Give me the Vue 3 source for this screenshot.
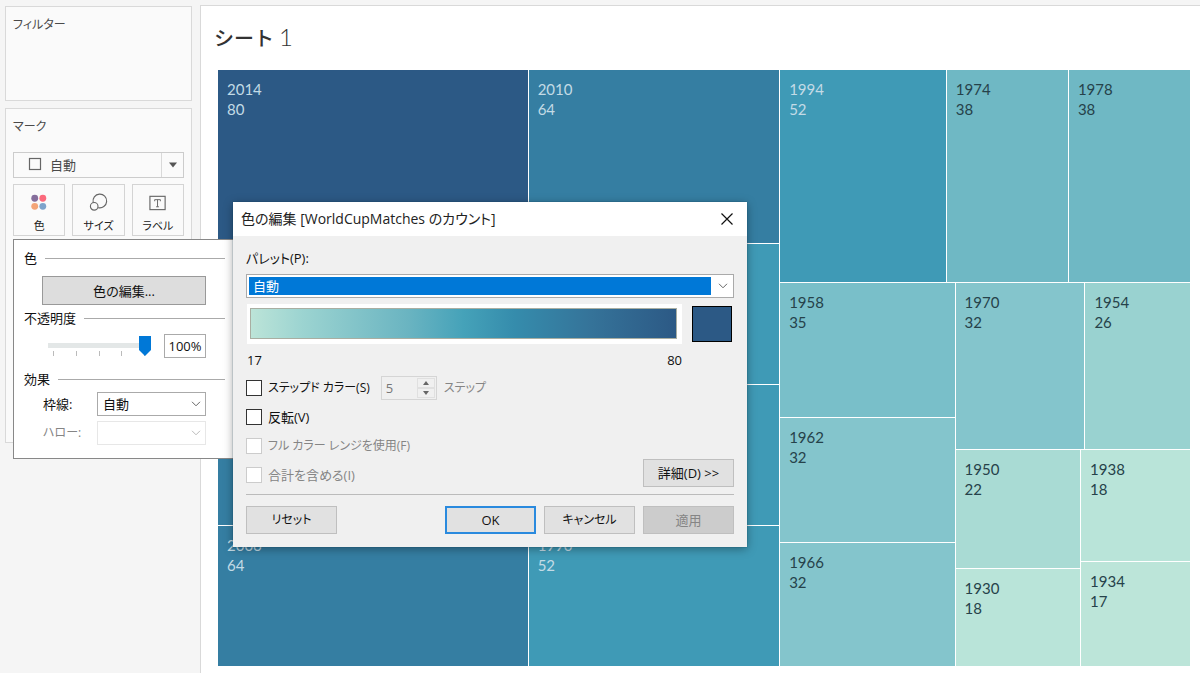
<script setup>
import { ref } from 'vue'

const opacity = ref(100)
const dark = (year, count, color) => ({ year, count, color, light: true, labelled: true })
const pale = (year, count, color) => ({ year, count, color, light: false, labelled: true })
const plain = (year, count, color) => ({ year, count, color, light: true, labelled: false })

const sum = (tiles) => tiles.reduce((total, tile) => total + tile.count, 0)
const grow = (count) => ({ flexGrow: count })
const paint = (tile) => ({ flexGrow: tile.count, backgroundColor: tile.color })

const first = [
  dark(2014, 80, '#2c5985'),
  plain(1998, 64, '#357ea2'),
  plain(2002, 64, '#357ea2'),
  dark(2006, 64, '#357ea2'),
]
const second = [
  dark(2010, 64, '#357ea2'),
  plain(1982, 52, '#3f9ab6'),
  plain(1986, 52, '#3f9ab6'),
  dark(1990, 52, '#3f9ab6'),
]
const upper = [
  dark(1994, 52, '#3f9ab6'),
  pale(1974, 38, '#6fb8c4'),
  pale(1978, 38, '#6fb8c4'),
]
const middle = [
  pale(1958, 35, '#79bfc9'),
  pale(1962, 32, '#84c5cc'),
  pale(1966, 32, '#84c5cc'),
]
const cornerTop = [pale(1970, 32, '#84c5cc'), pale(1954, 26, '#99d2d0')]
const cornerLeft = [pale(1950, 22, '#a9dbd4'), pale(1930, 18, '#b9e4d9')]
const cornerRight = [pale(1938, 18, '#b9e4d9'), pale(1934, 17, '#bce5d9')]

const cornerBottomSum = sum(cornerLeft) + sum(cornerRight)
const cornerSum = sum(cornerTop) + cornerBottomSum
const lowerSum = sum(middle) + cornerSum
const thirdSum = sum(upper) + lowerSum
</script>

<template>
  <div class="workspace">
    <aside class="side">
      <section class="card filters">
        <h2>フィルター</h2>
      </section>
      <section class="card marks">
        <h2>マーク</h2>
        <div class="mark-type">
          <select aria-label="マーク タイプ">
            <option>自動</option>
          </select>
          <svg class="square" width="14" height="14" viewBox="0 0 14 14"><rect x="1.5" y="1.5" width="11" height="11" fill="none" stroke="#666" stroke-width="1.2" /></svg>
          <span class="arrow"><svg width="10" height="6" viewBox="0 0 10 6"><path d="M1 0.5h8L5 5.5z" fill="#555" /></svg></span>
        </div>
        <div class="mark-buttons">
          <button type="button">
            <svg width="20" height="20" viewBox="0 0 20 20">
              <circle cx="5.5" cy="5.5" r="3.6" fill="#856e9c" /><circle cx="14" cy="5.5" r="3.6" fill="#fb6a7c" />
              <circle cx="5.5" cy="14" r="3.6" fill="#f4a578" /><circle cx="14" cy="14" r="3.6" fill="#7ea3cb" />
            </svg>
            <span>色</span>
          </button>
          <button type="button">
            <svg width="20" height="20" viewBox="0 0 20 20" fill="none" stroke="#666" stroke-width="1.2">
              <path d="M4.9 10A7.2 7.2 0 1 1 10.2 15.4" /><circle cx="6" cy="14" r="4" />
            </svg>
            <span>サイズ</span>
          </button>
          <button type="button">
            <svg width="20" height="20" viewBox="0 0 20 20" fill="none" stroke="#666">
              <rect x="1.5" y="3.5" width="16" height="14" stroke-width="1.2" />
              <path d="M6.5 8.7V7h6v1.7M9.5 7v7.5M8 14.5h3" />
            </svg>
            <span>ラベル</span>
          </button>
        </div>
      </section>
    </aside>

    <main class="sheet">
      <h1>シート <span>1</span></h1>
      <div class="treemap">
        <div class="column" :style="grow(sum(first))">
          <div v-for="t in first" :key="t.year" class="tile" :class="{ light: t.light }" :style="paint(t)"><p v-if="t.labelled">{{ t.year }}<br />{{ t.count }}</p></div>
        </div>
        <div class="column" :style="grow(sum(second))">
          <div v-for="t in second" :key="t.year" class="tile" :class="{ light: t.light }" :style="paint(t)"><p v-if="t.labelled">{{ t.year }}<br />{{ t.count }}</p></div>
        </div>
        <div class="column" :style="grow(thirdSum)">
          <div class="row" :style="grow(sum(upper))">
            <div v-for="t in upper" :key="t.year" class="tile" :class="{ light: t.light }" :style="paint(t)"><p>{{ t.year }}<br />{{ t.count }}</p></div>
          </div>
          <div class="row" :style="grow(lowerSum)">
            <div class="column" :style="grow(sum(middle))">
              <div v-for="t in middle" :key="t.year" class="tile" :style="paint(t)"><p>{{ t.year }}<br />{{ t.count }}</p></div>
            </div>
            <div class="column" :style="grow(cornerSum)">
              <div class="row" :style="grow(sum(cornerTop))">
                <div v-for="t in cornerTop" :key="t.year" class="tile" :style="paint(t)"><p>{{ t.year }}<br />{{ t.count }}</p></div>
              </div>
              <div class="row" :style="grow(cornerBottomSum)">
                <div class="column" :style="grow(sum(cornerLeft))">
                  <div v-for="t in cornerLeft" :key="t.year" class="tile" :style="paint(t)"><p>{{ t.year }}<br />{{ t.count }}</p></div>
                </div>
                <div class="column" :style="grow(sum(cornerRight))">
                  <div v-for="t in cornerRight" :key="t.year" class="tile" :style="paint(t)"><p>{{ t.year }}<br />{{ t.count }}</p></div>
                </div>
              </div>
            </div>
          </div>
        </div>
      </div>
    </main>

    <section class="popover">
      <h3>色</h3>
      <button type="button" class="edit">色の編集...</button>
      <h3>不透明度</h3>
      <div class="opacity">
        <div class="slider">
          <input v-model="opacity" type="range" min="0" max="100" aria-label="不透明度" />
          <div class="ticks"><i></i><i></i><i></i><i></i><i></i></div>
        </div>
        <input class="percent" type="text" :value="opacity + '%'" aria-label="不透明度の値" />
      </div>
      <h3>効果</h3>
      <div class="effects">
        <label for="border">枠線:</label>
        <div class="drop">
          <select id="border"><option>自動</option></select>
          <svg width="10" height="6" viewBox="0 0 10 6"><path d="M1 0.8l4 4 4-4" fill="none" stroke="#666" /></svg>
        </div>
        <label for="halo" class="off kana">ハロー:</label>
        <div class="drop off">
          <select id="halo" disabled><option></option></select>
          <svg width="10" height="6" viewBox="0 0 10 6"><path d="M1 0.8l4 4 4-4" fill="none" stroke="#bbb" /></svg>
        </div>
      </div>
    </section>

    <div class="dialog" role="dialog" aria-labelledby="dialog-title">
      <header>
        <h2 id="dialog-title">色の編集 [WorldCupMatches のカウント]</h2>
        <button type="button" aria-label="閉じる">
          <svg width="14" height="14" viewBox="0 0 14 14"><path d="M1.5 1.5l11 11M12.5 1.5l-11 11" stroke="#111" stroke-width="1.2" /></svg>
        </button>
      </header>
      <div class="body">
        <label for="palette" class="palette-label">パレット(P):</label>
        <div class="palette">
          <select id="palette"><option>自動</option></select>
          <svg width="10" height="6" viewBox="0 0 10 6"><path d="M1 0.8l4 4 4-4" fill="none" stroke="#666" /></svg>
        </div>
        <div class="preview">
          <div class="ramp-frame"><div class="ramp"></div></div>
          <button type="button" class="swatch" aria-label="終了色"></button>
          <div class="range"><span>17</span><span>80</span></div>
        </div>
        <div class="options">
          <div class="checks">
            <div class="check">
              <label class="kana"><input type="checkbox" />ステップド カラー(S)</label>
              <div class="stepper">
                <input type="text" value="5" disabled aria-label="ステップ数" />
                <div>
                  <button type="button" disabled aria-label="増やす"><svg width="6" height="4" viewBox="0 0 6 4"><path d="M0 4h6L3 0z" fill="#666" /></svg></button>
                  <button type="button" disabled aria-label="減らす"><svg width="6" height="4" viewBox="0 0 6 4"><path d="M0 0h6L3 4z" fill="#666" /></svg></button>
                </div>
              </div>
              <span class="off kana">ステップ</span>
            </div>
            <div class="check"><label><input type="checkbox" />反転(V)</label></div>
            <div class="check"><label class="off kana"><input type="checkbox" disabled />フル カラー レンジを使用(F)</label></div>
            <div class="check"><label class="off"><input type="checkbox" disabled />合計を含める(I)</label></div>
          </div>
          <button type="button" class="btn">詳細(D) &gt;&gt;</button>
        </div>
        <footer>
          <button type="button" class="btn reset kana">リセット</button>
          <button type="button" class="btn primary">OK</button>
          <button type="button" class="btn kana">キャンセル</button>
          <button type="button" class="btn" disabled>適用</button>
        </footer>
      </div>
    </div>
  </div>
</template>

<style>
body {
  margin: 0;
  background: #f5f5f5;
}
</style>

<style scoped>
.workspace,
.workspace * {
  box-sizing: border-box;
}
.workspace {
  position: relative;
  display: flex;
  min-height: 100vh;
  overflow: hidden;
  background: #f5f5f5;
  color: #111;
  font: 13px/20px "Open Sans", "Noto Sans CJK JP", sans-serif;
  font-feature-settings: "palt";
}
h1,
h2,
h3,
p {
  margin: 0;
  font-weight: 400;
}
button,
input,
select {
  margin: 0;
  padding: 0;
  border-radius: 0;
  color: inherit;
  font: inherit;
  font-feature-settings: inherit;
}
select {
  appearance: none;
}
svg {
  display: block;
}
.kana {
  font-size: 12px;
}

.side {
  flex: none;
  display: flex;
  flex-direction: column;
  gap: 7px;
  width: 200px;
  padding: 6px 8px 0 5px;
}
.card {
  padding: 8px 7px 0;
  border: 1px solid #d9d9d9;
  background: #fafafa;
  color: #4a4a4a;
}
.card h2 {
  font-size: 12px;
  line-height: 20px;
}
.filters {
  height: 95px;
}
.marks {
  height: 335px;
}
.mark-type {
  position: relative;
  margin-top: 15px;
}
.mark-type select {
  display: block;
  width: 100%;
  height: 26px;
  padding-left: 36px;
  border: 1px solid #ccc;
  background: #fafafa;
}
.square {
  position: absolute;
  left: 15px;
  top: 5px;
}
.arrow {
  position: absolute;
  inset: 1px 1px 1px auto;
  display: grid;
  place-items: center;
  width: 22px;
  border-left: 1px solid #d9d9d9;
  pointer-events: none;
}
.mark-buttons {
  display: grid;
  grid-template-columns: repeat(3, 1fr);
  gap: 7px;
  margin-top: 6px;
}
.mark-buttons button {
  display: flex;
  flex-direction: column;
  align-items: center;
  gap: 5px;
  height: 52px;
  padding-top: 8px;
  border: 1px solid #d4d4d4;
  background: #fafafa;
  color: #222;
  font-size: 11px;
  line-height: 18px;
}

.sheet {
  flex: 1;
  display: flex;
  flex-direction: column;
  min-width: 0;
  margin-top: 5px;
  padding: 14px 10px 7px 17px;
  border: solid #d9d9d9;
  border-width: 1px 0 0 1px;
  background: #fff;
}
h1 {
  height: 50px;
  margin-left: -4px;
  color: #333;
  font: 500 20px/34px Lato, "Noto Sans CJK JP", sans-serif;
}
h1 span {
  font-size: 24px;
  font-weight: 300;
}
.treemap,
.row,
.column {
  display: flex;
  flex: 1 1 0;
  gap: 1px;
  min-width: 0;
  min-height: 0;
}
.column {
  flex-direction: column;
}
.tile {
  flex: 1 1 0;
  min-width: 0;
  min-height: 0;
  overflow: hidden;
  color: #26424a;
  font: 15px/20px Lato, sans-serif;
}
.tile.light {
  color: #c3dbe6;
}
.tile p {
  padding: 9px 9px 0;
}

.popover {
  position: absolute;
  left: 13px;
  top: 239px;
  width: 240px;
  padding: 8px 27px 13px 10px;
  border: 1px solid #888;
  background: #fff;
}
.popover h3 {
  display: flex;
  align-items: center;
  gap: 8px;
  line-height: 20px;
  font-size: 13px;
}
.popover h3::after {
  content: "";
  flex: 1;
  height: 1px;
  background: #aaa;
}
.edit {
  display: block;
  width: 164px;
  height: 29px;
  margin: 8px 0 3px 18px;
  border: 1px solid #999;
  background: #ddd;
}
.opacity {
  display: flex;
  align-items: center;
  gap: 13px;
  height: 24px;
  margin: 6px 0 11px 24px;
}
.slider {
  width: 103px;
  height: 20px;
}
.slider input {
  display: block;
  width: 100%;
  height: 20px;
  appearance: none;
  background: linear-gradient(#e3e7e7, #e3e7e7) 0 7px / 100% 5px no-repeat;
}
.slider input::-webkit-slider-thumb {
  appearance: none;
  width: 12px;
  height: 20px;
  background: #0078d7;
  clip-path: polygon(0 0, 100% 0, 100% 70%, 50% 100%, 0 70%);
}
.ticks {
  position: relative;
  z-index: -1;
  display: flex;
  justify-content: space-between;
  margin: -5px 6px 0 5px;
}
.slider,
.opacity {
  isolation: isolate;
}
.ticks i {
  width: 1px;
  height: 5px;
  background: #bbb;
}
.percent {
  width: 42px;
  height: 24px;
  border: 1px solid #aaa;
  background: #fff;
  text-align: center;
}
.effects {
  display: grid;
  grid-template-columns: 54px 109px;
  gap: 5px 0;
  align-items: center;
  margin: 3px 0 0 19px;
}
.drop {
  position: relative;
}
.drop select {
  display: block;
  width: 100%;
  height: 24px;
  padding-left: 5px;
  border: 1px solid #aaa;
  background: #fff;
}
.drop.off select {
  border-color: #ddd;
}
.drop svg {
  position: absolute;
  right: 5px;
  top: 9px;
  pointer-events: none;
}
.off {
  color: #858585;
}

.dialog {
  position: absolute;
  left: 233px;
  top: 202px;
  width: 514px;
  background: #f0f0f0;
  box-shadow: 0 0 1px rgba(0, 60, 90, 0.7), 0 2px 9px rgba(0, 0, 0, 0.35);
}
.dialog header {
  display: flex;
  align-items: center;
  justify-content: space-between;
  height: 34px;
  padding: 0 13px 0 8px;
  background: #fff;
}
.dialog header h2 {
  color: #222;
  font-size: 14px;
}
.dialog header button {
  border: 0;
  background: none;
}
.body {
  padding: 12px 13px 13px;
}
.palette-label {
  display: block;
}
.palette {
  position: relative;
  margin-top: 6px;
  background: #fff;
}
.palette select {
  display: block;
  width: 100%;
  height: 24px;
  padding: 2px 22px 2px 2px;
  border: 1px solid #aaa;
  background: #0078d7 content-box;
  color: #fff;
  line-height: 18px;
  text-indent: 4px;
}
.palette svg {
  position: absolute;
  right: 6px;
  top: 9px;
  pointer-events: none;
}
.preview {
  display: grid;
  grid-template-columns: 1fr 40px;
  column-gap: 10px;
  align-items: center;
  margin: 6px 2px 6px 1px;
}
.ramp-frame {
  padding: 4px 5px 5px 3px;
  background: #fff;
}
.ramp {
  height: 31px;
  border: 1px solid #a9aea2;
  background: linear-gradient(90deg, #bce4d8, #9cd4d1 12%, #6ab4c1 37%, #45a2b9 50%, #358cac 62%, #357399 80%, #2c5985);
}
.swatch {
  height: 36px;
  border: 1px solid #000;
  background: #2c5985;
}
.range {
  display: flex;
  justify-content: space-between;
  margin-top: 6px;
}
.options {
  display: flex;
  align-items: flex-end;
  justify-content: space-between;
}
.checks {
  display: grid;
  gap: 5px;
}
.check {
  display: flex;
  align-items: center;
  height: 24px;
}
.check label {
  display: flex;
  align-items: center;
  gap: 6px;
  margin-right: 11px;
}
.check label input {
  appearance: none;
  width: 16px;
  height: 16px;
  border: 1px solid #333;
  background: #fff;
}
.check label input:disabled {
  border-color: #ccc;
}
.stepper {
  display: flex;
  width: 56px;
  height: 24px;
  margin-right: 7px;
  padding: 1px;
  border: 1px solid #d5d5d5;
}
.stepper input {
  flex: 1;
  min-width: 0;
  padding-left: 3px;
  border: 0;
  background: none;
  color: #777;
}
.stepper div {
  display: grid;
  width: 18px;
}
.stepper button {
  display: grid;
  place-items: center;
  border: 1px solid #e0e0e0;
  background: #f0f0f0;
}
.btn {
  width: 91px;
  height: 28px;
  border: 1px solid #bfbfbf;
  background: #e1e1e1;
}
.btn:disabled {
  background: #ccc;
  color: #858585;
}
.btn.primary {
  border: 2px solid #2a8ade;
}
footer {
  display: flex;
  gap: 8px;
  margin-top: 7px;
  padding-top: 11px;
  border-top: 1px solid #bbb;
}
.reset {
  margin-right: auto;
}
</style>
